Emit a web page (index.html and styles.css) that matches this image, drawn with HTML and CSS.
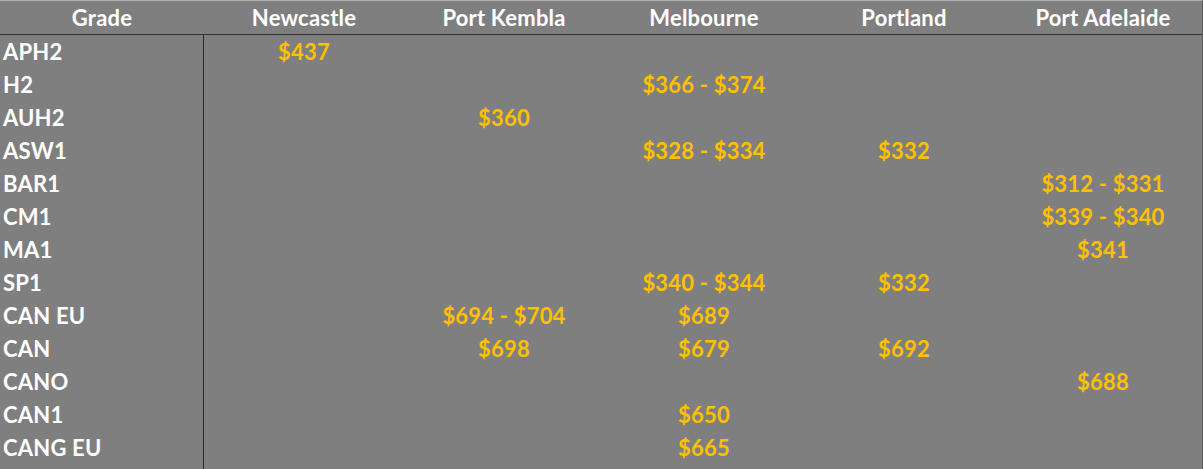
FILE: index.html
```html
<!DOCTYPE html>
<html>
<head>
<meta charset="utf-8">
<link rel="stylesheet" href="styles.css">
</head>
<body>
<div class="sheet">
  <div class="row head">
    <div class="cell grade">Grade</div>
    <div class="cell">Newcastle</div>
    <div class="cell">Port Kembla</div>
    <div class="cell">Melbourne</div>
    <div class="cell">Portland</div>
    <div class="cell">Port Adelaide</div>
  </div>
  <div class="body">
    <div class="row"><div class="cell name">APH2</div><div class="cell v">$437</div><div class="cell v"></div><div class="cell v"></div><div class="cell v"></div><div class="cell v"></div></div>
    <div class="row"><div class="cell name">H2</div><div class="cell v"></div><div class="cell v"></div><div class="cell v">$366 - $374</div><div class="cell v"></div><div class="cell v"></div></div>
    <div class="row"><div class="cell name">AUH2</div><div class="cell v"></div><div class="cell v">$360</div><div class="cell v"></div><div class="cell v"></div><div class="cell v"></div></div>
    <div class="row"><div class="cell name">ASW1</div><div class="cell v"></div><div class="cell v"></div><div class="cell v">$328 - $334</div><div class="cell v">$332</div><div class="cell v"></div></div>
    <div class="row"><div class="cell name">BAR1</div><div class="cell v"></div><div class="cell v"></div><div class="cell v"></div><div class="cell v"></div><div class="cell v">$312 - $331</div></div>
    <div class="row"><div class="cell name">CM1</div><div class="cell v"></div><div class="cell v"></div><div class="cell v"></div><div class="cell v"></div><div class="cell v">$339 - $340</div></div>
    <div class="row"><div class="cell name">MA1</div><div class="cell v"></div><div class="cell v"></div><div class="cell v"></div><div class="cell v"></div><div class="cell v">$341</div></div>
    <div class="row"><div class="cell name">SP1</div><div class="cell v"></div><div class="cell v"></div><div class="cell v">$340 - $344</div><div class="cell v">$332</div><div class="cell v"></div></div>
    <div class="row"><div class="cell name">CAN EU</div><div class="cell v"></div><div class="cell v">$694 - $704</div><div class="cell v">$689</div><div class="cell v"></div><div class="cell v"></div></div>
    <div class="row"><div class="cell name">CAN</div><div class="cell v"></div><div class="cell v">$698</div><div class="cell v">$679</div><div class="cell v">$692</div><div class="cell v"></div></div>
    <div class="row"><div class="cell name">CANO</div><div class="cell v"></div><div class="cell v"></div><div class="cell v"></div><div class="cell v"></div><div class="cell v">$688</div></div>
    <div class="row"><div class="cell name">CAN1</div><div class="cell v"></div><div class="cell v"></div><div class="cell v">$650</div><div class="cell v"></div><div class="cell v"></div></div>
    <div class="row last"><div class="cell name">CANG EU</div><div class="cell v"></div><div class="cell v"></div><div class="cell v">$665</div><div class="cell v"></div><div class="cell v"></div></div>
  </div>
</div>
</body>
</html>
```
FILE: styles.css
```css
html, body {
  margin: 0;
  padding: 0;
  background: #7f7f7f;
}
.sheet {
  width: 1203px;
  height: 469px;
  background: #7f7f7f;
  border-top: 1px solid #b0b0b0;
  border-right: 1px solid #5a5a5a;
  box-sizing: border-box;
  font-family: Lato, "Open Sans", sans-serif;
  font-weight: 700;
  font-size: 22px;
  letter-spacing: 0.2px;
  color: #ffffff;
  overflow: hidden;
}
.row {
  display: grid;
  grid-template-columns: 204px 200px 200px 200px 200px 1fr;
  height: 33px;
  align-items: center;
}
.head {
  height: 33px;
  border-bottom: 1px solid #333333;
}
.cell {
  text-align: center;
  white-space: nowrap;
}
.name {
  text-align: left;
  padding-left: 3px;
  height: 100%;
  line-height: 33px;
  border-right: 1px solid #2b2b2b;
  box-sizing: border-box;
}
.row.last {
  height: 38px;
  align-items: start;
}
.row.last .v {
  line-height: 33px;
}
.v {
  color: #ffc000;
}
```
